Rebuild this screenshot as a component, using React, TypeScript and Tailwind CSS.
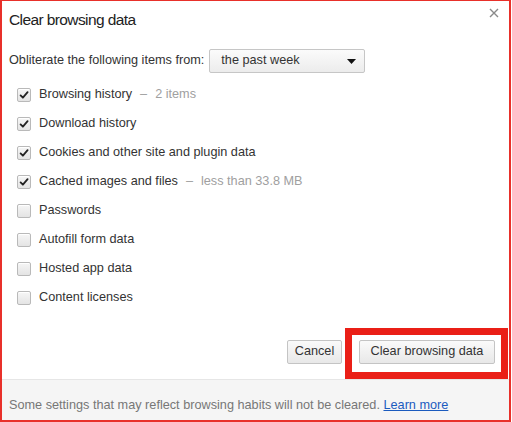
import React from 'react';

const items = [
  { label: 'Browsing history', note: '2 items', checked: true },
  { label: 'Download history', checked: true },
  { label: 'Cookies and other site and plugin data', checked: true },
  { label: 'Cached images and files', note: 'less than 33.8 MB', checked: true },
  { label: 'Passwords', checked: false },
  { label: 'Autofill form data', checked: false },
  { label: 'Hosted app data', checked: false },
  { label: 'Content licenses', checked: false },
];

const Checkbox = ({ checked }: { checked: boolean }) => (
  <span className="flex h-[14px] w-[14px] items-center justify-center rounded-[2px] border border-[#b9b9b9] bg-gradient-to-b from-[#f6f6f6] to-[#e4e4e4] shadow-[inset_0_1px_0_#fff]">
    {checked && (
      <svg width="10" height="10" viewBox="0 0 10 10">
        <path d="M1.6 5.4 L3.9 7.7 L8.6 2.2" fill="none" stroke="#222" strokeWidth="1.8" strokeLinecap="round" strokeLinejoin="round" />
      </svg>
    )}
  </span>
);

const App = () => {
  return (
    <div className="h-[422px] w-[512px] bg-white font-['Liberation_Sans',Arial,sans-serif]">
      <div className="flex h-[422px] w-[511px] flex-col border-b-2 border-l-2 border-r-2 border-t border-[#e8302a] text-[12.7px] text-[#333]">
        <div className="flex h-[38px] items-center justify-between pl-[7px] pr-[10px]">
          <h1 className="text-[15.5px] tracking-[-0.6px] text-[#222]">Clear browsing data</h1>
          <svg width="10" height="10" viewBox="0 0 10 10" className="mb-[14px]">
            <path d="M1 1 L9 9 M9 1 L1 9" stroke="#8a8a8a" strokeWidth="1.4" />
          </svg>
        </div>

        <div className="mt-[10px] flex items-center pl-[7px]">
          <span>Obliterate the following items from:</span>
          <div className="ml-[5px] flex h-[24px] w-[156px] items-center justify-between rounded-[2px] border border-[#c6c6c6] bg-gradient-to-b from-[#fbfbfb] to-[#ececec] pl-[11px] pr-[8px]">
            <span>the past week</span>
            <svg width="9" height="5" viewBox="0 0 9 5">
              <path d="M0 0 H9 L4.5 5 Z" fill="#111" />
            </svg>
          </div>
        </div>

        <div className="mt-[7px] flex flex-col pl-[15px]">
          {items.map((item) => (
            <div key={item.label} className="flex h-[29px] items-center">
              <Checkbox checked={item.checked} />
              <span className="ml-[8px]">{item.label}</span>
              {item.note && (
                <>
                  <span className="mx-[8px] text-[#a0a0a0]">–</span>
                  <span className="text-[#a0a0a0]">{item.note}</span>
                </>
              )}
            </div>
          ))}
        </div>

        <div className="flex flex-1 items-end justify-end pr-[1px]">
          <button className="mb-[15px] mr-[3px] h-[24px] w-[55px] rounded-[2px] border border-[#c4c4c4] bg-gradient-to-b from-[#fafafa] to-[#e8e8e8] text-[12.7px] text-[#333]">
            Cancel
          </button>
          <div className="border-[7px] border-[#ea1f17] bg-white pb-[8px] pl-[7px] pr-[6px] pt-[5px]">
            <button className="h-[24px] w-[136px] rounded-[2px] border border-[#c4c4c4] bg-gradient-to-b from-[#fafafa] to-[#e8e8e8] text-[12.7px] text-[#333]">
              Clear browsing data
            </button>
          </div>
        </div>

        <div className="h-[41px] border-t border-[#e6e6e6] bg-[#f5f5f5] pl-[7px] pt-[16px] text-[#777]">
          Some settings that may reflect browsing habits will not be cleared.{' '}
          <a className="text-[#1b5bbf] underline">Learn more</a>
        </div>
      </div>
    </div>
  );
};

export default App;
